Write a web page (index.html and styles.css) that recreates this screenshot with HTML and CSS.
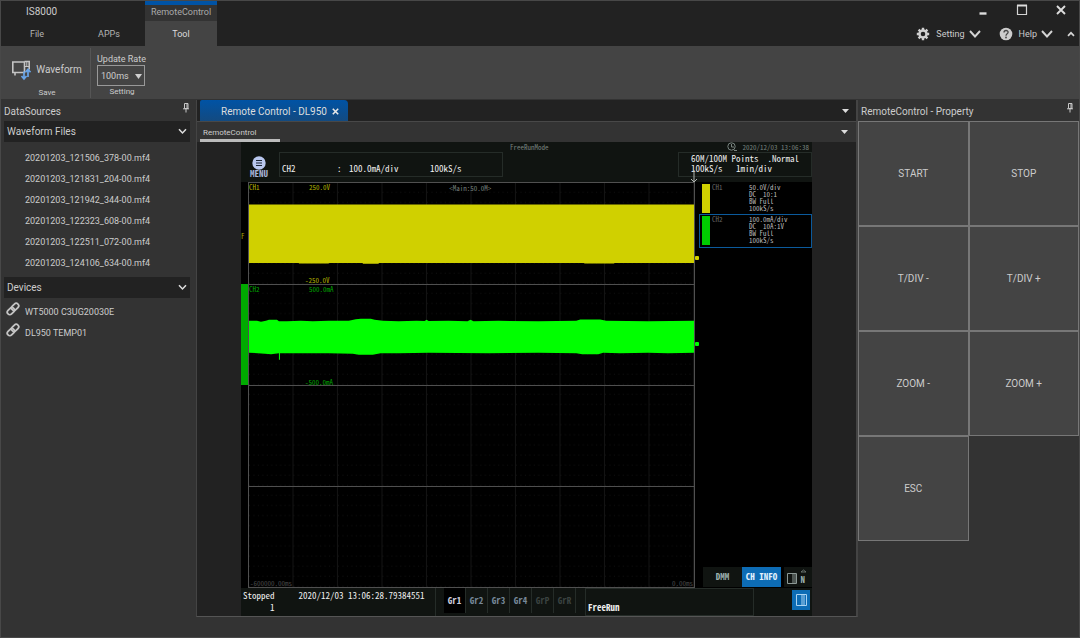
FILE: index.html
```html
<!DOCTYPE html>
<html lang="en">
<head>
<meta charset="utf-8">
<title>IS8000</title>
<link rel="stylesheet" href="styles.css">
</head>
<body>
<div class="app">
  <header class="top">
    <div class="menu-left">
      <span class="app-name">IS8000</span>
      <div class="menu-tabs">
        <button class="menu-tab">File</button>
        <button class="menu-tab">APPs</button>
      </div>
    </div>
    <div class="context-tab">
      <span class="context-name">RemoteControl</span>
      <button class="context-tool">Tool</button>
    </div>
    <div class="top-right">
      <div class="window-buttons">
        <button aria-label="Minimize"><svg width="12" height="12" viewBox="0 0 12 12"><path d="M2.500 9.500h7" stroke="#ddd" stroke-width="2.400"/></svg></button>
        <button aria-label="Maximize"><svg width="12" height="12" viewBox="0 0 12 12"><path d="M1.500 1.500h9v9h-9z" fill="none" stroke="#d4d4d4" stroke-width="1.200"/><path d="M1 1.500h10" stroke="#ddd" stroke-width="2"/></svg></button>
        <button aria-label="Close"><svg width="12" height="12" viewBox="0 0 12 12"><path d="M2 2l8 8M10 2l-8 8" stroke="#ddd" stroke-width="1.900"/></svg></button>
      </div>
      <div class="top-tools">
        <button class="top-tool"><svg width="14" height="14" viewBox="0 0 14 14"><path d="M7 .8v12.400M.8 7h12.400M2.600 2.600l8.800 8.800M11.400 2.600l-8.800 8.800" stroke="#d0d0d0" stroke-width="2.400"/><circle cx="7" cy="7" r="3.500" fill="#222" stroke="#d0d0d0" stroke-width="2.400"/></svg><span>Setting</span><svg width="12" height="8" viewBox="0 0 12 8"><path d="M1 1l5 5.500L11 1" fill="none" stroke="#d4d4d4" stroke-width="1.900"/></svg></button>
        <button class="top-tool"><svg width="14" height="14" viewBox="0 0 14 14"><circle cx="7" cy="7" r="6.300" fill="#ccc"/><path d="M5 5.400c0-2.600 4.200-2.500 4.100-.1C9.100 6.900 7 6.700 7 8.700" fill="none" stroke="#444" stroke-width="1.300"/><circle cx="7" cy="10.500" r=".9" fill="#444"/></svg><span>Help</span><svg width="12" height="8" viewBox="0 0 12 8"><path d="M1 1l5 5.500L11 1" fill="none" stroke="#d4d4d4" stroke-width="1.900"/></svg></button>
        <button class="top-tool" aria-label="Collapse ribbon"><svg width="8" height="6" viewBox="0 0 8 6"><path d="M1 4.800L4 1.800l3 3" fill="none" stroke="#d4d4d4" stroke-width="1.700"/></svg></button>
      </div>
    </div>
  </header>

  <section class="ribbon">
    <div class="ribbon-group save-group">
      <button class="waveform-button">
        <svg width="20" height="22" viewBox="0 0 20 22"><path d="M.8 3h11.700v10.500H.8zM12.500 2.500h4.700v8M3 14v2.500" fill="none" stroke="#c4c4c4" stroke-width="1.600"/><path d="M14.800 3v5M13 7.500h4" stroke="#c4c4c4"/><path d="M12 12.500v7M9.500 17l2.500 3 2.500-3M16 18v-7M13.500 13.200L16 10.300l2.500 2.900" fill="none" stroke="#69a5e8" stroke-width="1.700"/></svg>
        <span>Waveform</span>
      </button>
      <span class="group-name">Save</span>
    </div>
    <div class="ribbon-group rate-group">
      <label for="rate">Update Rate</label>
      <div class="select-box">
        <select id="rate"><option>100ms</option></select>
        <svg class="select-arrow" width="7" height="5" viewBox="0 0 7 5"><path d="M0 0h7L3.500 5z" fill="#d0d0d0"/></svg>
      </div>
      <span class="group-name">Setting</span>
    </div>
  </section>

  <main class="body">
    <aside class="sources">
      <div class="panel-head"><span>DataSources</span><svg width="8" height="10" viewBox="0 0 8 10"><path d="M2.500 .5h3.500v5H2.500zM1 5.800h6M4 6v3.500" fill="none" stroke="#c8c8c8"/><path d="M5 .5v5" stroke="#c8c8c8"/></svg></div>
      <button class="section-head"><span>Waveform Files</span><svg width="9" height="7" viewBox="0 0 9 7"><path d="M1 1.200l3.500 3.800L8 1.200" fill="none" stroke="#ddd" stroke-width="1.500"/></svg></button>
      <ul class="files">
        <li>20201203_121506_378-00.mf4</li>
        <li>20201203_121831_204-00.mf4</li>
        <li>20201203_121942_344-00.mf4</li>
        <li>20201203_122323_608-00.mf4</li>
        <li>20201203_122511_072-00.mf4</li>
        <li>20201203_124106_634-00.mf4</li>
      </ul>
      <button class="section-head"><span>Devices</span><svg width="9" height="7" viewBox="0 0 9 7"><path d="M1 1.200l3.500 3.800L8 1.200" fill="none" stroke="#ddd" stroke-width="1.500"/></svg></button>
      <ul class="devices">
        <li><svg width="14" height="14" viewBox="0 0 14 14"><g fill="none" stroke="#c4c4c4" stroke-width="1.800" transform="rotate(-45 7 7)"><rect x="0" y="4.500" width="8" height="5" rx="2.500"/><rect x="6" y="4.500" width="8" height="5" rx="2.500"/></g></svg><span>WT5000 C3UG20030E</span></li>
        <li><svg width="14" height="14" viewBox="0 0 14 14"><g fill="none" stroke="#c4c4c4" stroke-width="1.800" transform="rotate(-45 7 7)"><rect x="0" y="4.500" width="8" height="5" rx="2.500"/><rect x="6" y="4.500" width="8" height="5" rx="2.500"/></g></svg><span>DL950 TEMP01</span></li>
      </ul>
    </aside>

    <section class="work">
      <div class="doc-tabs">
        <div class="doc-tab"><span>Remote Control - DL950</span><button aria-label="Close tab"><svg width="7" height="7" viewBox="0 0 7 7"><path d="M.8 .8l5.400 5.400M6.200 .8L.8 6.200" stroke="#e8e8e8" stroke-width="1.600"/></svg></button></div>
        <svg width="7" height="4" viewBox="0 0 7 4"><path d="M0 0h7L3.500 4z" fill="#ddd"/></svg>
      </div>
      <div class="sub-tabs">
        <button class="sub-tab">RemoteControl</button>
        <svg width="7" height="4" viewBox="0 0 7 4"><path d="M0 0h7L3.500 4z" fill="#ddd"/></svg>
      </div>
      <div class="stage">
        <div class="scope">
          <div class="scope-head">
            <button class="scope-menu"><svg width="14" height="14" viewBox="0 0 14 14"><circle cx="7" cy="7" r="6.700" fill="#b9c7ee"/><path d="M4 4.500h6M4 7h6M4 9.500h6" stroke="#1c2535" stroke-width="1.200"/></svg><span>MENU</span></button>
            <div class="readout"><span>CH2</span><span>:</span><span>100.0mA/div</span><span>100kS/s</span></div>
            <span class="mode">FreeRunMode</span>
            <div class="acq">
              <div class="clock"><svg width="10" height="10" viewBox="0 0 10 10"><circle cx="4.500" cy="4.500" r="3.700" fill="none" stroke="#78837f"/><path d="M4.500 2v3H7M7 8.500h3" fill="none" stroke="#78837f"/></svg><span>2020/12/03 13:06:38</span></div>
              <div class="acq-box"><span>60M/100M Points&nbsp; .Normal</span><span>100kS/s&nbsp;&nbsp; 1min/div</span></div>
            </div>
          </div>
          <div class="scope-mid">
            <div class="gutter"><span class="mark-1">F</span><span class="mark-2"></span></div>
            <div class="plot">
              <svg class="wave" viewBox="0 0 446 406" preserveAspectRatio="none">
                <defs>
                  <pattern id="grid" width="44.600" height="10.150" patternUnits="userSpaceOnUse"><path d="M44.100 0v10.150" stroke="#131313"/><path d="M0 9.500h44.600" stroke="#121212" stroke-dasharray="1 3.460"/></pattern>
                </defs>
                <rect width="446" height="406" fill="url(#grid)"/>
                <path d="M0 102h446M0 203.500h446M0 305h446" stroke="#505050"/>
                <path d="M0 21.500h446V80.500h-80v.5h-30v-.5H130v.6h-16v-.6H80v.5H50v-.5H0z" fill="#d0d000"/>
                <path d="M0 138.500H8L12 139.500 17 138.500 20 137.500H28L30 139H38L52 138.500 64 139 80 138.500 100 138.500 107 137 112 136.500H122L126 137.500 134 138.500 150 139 168 138.500 176 138.800 178 137.500 180 138.800 200 138.500 219 139 222 137.500 225 139 250 138.500 290 139 328 138.500 332 137.200H352L358 138.500 400 139 446 138.500V170.500L420 171 400 170.500 372 171 355 170.500 350 172H334L328 171 290 170.500 240 171.200 180 170.500 150 171 132 171 124 172.500H110L104 171.500 80 171 31 171V177.500H30V171L22 172 16 171.500 0 170.500z" fill="#0f0"/>
              </svg>
              <span class="tag yellow ch1">CH1</span>
              <span class="tag yellow v-top">250.0V</span>
              <span class="tag main-tag">&lt;Main:50.0M&gt;</span>
              <span class="tag yellow v-bottom">-250.0V</span>
              <span class="tag green ch2">CH2</span>
              <span class="tag green a-top">500.0mA</span>
              <span class="tag green a-bottom">-500.0mA</span>
              <span class="tag dim t-start">-600000.00ms</span>
              <span class="tag dim t-end">0.00ms</span>
              <svg class="trigger" width="8" height="13" viewBox="0 0 8 13"><path d="M4 0v12M1 9l3 3 3-3" fill="none" stroke="#b0b4b0"/></svg>
              <i class="level level-1"></i><i class="level level-2"></i>
            </div>
            <div class="channels">
              <div class="channel"><i class="swatch swatch-1"></i><span class="channel-name">CH1</span><span class="channel-info">50.0V/div<br>DC&nbsp; 10:1<br>BW Full<br>100kS/s</span></div>
              <div class="channel selected"><i class="swatch swatch-2"></i><span class="channel-name">CH2</span><span class="channel-info">100.0mA/div<br>DC&nbsp; 10A:1V<br>BW Full<br>100kS/s</span></div>
              <div class="view-buttons">
                <button>DMM</button><button class="on">CH INFO</button>
                <button class="next"><svg width="20" height="16" viewBox="0 0 20 16"><path d="M.5 4.500h9v10h-9zM6 4.500v10M8 4.500v10" fill="none" stroke="#8c9895"/><path d="M14 3L16.500 1 19 3z" fill="none" stroke="#78837f" stroke-width=".8"/></svg><span>N</span></button>
              </div>
            </div>
          </div>
          <div class="scope-foot">
            <div class="state"><span class="state-name">Stopped<br>1</span><span>2020/12/03 13:06:28.79384551</span></div>
            <div class="groups"><button class="on">Gr1</button><button>Gr2</button><button>Gr3</button><button>Gr4</button><button class="off">GrP</button><button class="off">GrR</button></div>
            <span class="run">FreeRun</span>
            <button class="side" aria-label="Side panel"><svg width="11" height="12" viewBox="0 0 11 12"><path d="M.5 .5h10v11H.5zM6 .5v11M8 .5v11" fill="none" stroke="#a9d2f2"/></svg></button>
          </div>
        </div>
      </div>
    </section>

    <aside class="property">
      <div class="panel-head"><span>RemoteControl - Property</span><svg width="8" height="10" viewBox="0 0 8 10"><path d="M2.500 .5h3.500v5H2.500zM1 5.800h6M4 6v3.500" fill="none" stroke="#c8c8c8"/><path d="M5 .5v5" stroke="#c8c8c8"/></svg></div>
      <div class="keys">
        <button>START</button><button>STOP</button>
        <button>T/DIV -</button><button>T/DIV +</button>
        <button>ZOOM -</button><button>ZOOM +</button>
        <button>ESC</button>
      </div>
    </aside>
  </main>
  <footer class="status"></footer>
</div>
</body>
</html>
```

FILE: styles.css
```css
* { box-sizing: border-box; }
body { margin: 0; background: #333; color: #ccc; font: 10px/14px Roboto, "Open Sans", sans-serif; }
button, select { margin: 0; padding: 0; border: 0; background: none; color: inherit; font: inherit; }
ul { list-style: none; margin: 0; padding: 0; }
svg { display: block; flex: none; }
.app { min-height: 100vh; display: flex; flex-direction: column; border: 1px solid #484848; white-space: nowrap; }

/* Title bar and menu */
.top { display: flex; height: 45px; background: #222; }
.menu-left { width: 144px; padding-top: 4px; }
.app-name { display: block; padding-left: 25px; }
.menu-tabs { display: flex; margin-top: 8px; color: #b4b4b4; font-size: 9px; }
.menu-tab { width: 72px; }
.context-tab { width: 72px; display: flex; flex-direction: column; border-top: 4px solid #0053a5; background: #333; text-align: center; color: #aaa; font-size: 9px; }
.context-name { height: 16px; }
.context-tool { flex: 1; background: #444; color: #ddd; }
.top-right { margin-left: auto; padding-top: 3px; }
.window-buttons { display: flex; justify-content: flex-end; gap: 27px; padding-right: 12px; }
.top-tools { display: flex; justify-content: flex-end; margin-top: 11px; padding-right: 4px; gap: 18px; align-items: center; font-size: 9px; }
.top-tool { display: flex; align-items: center; gap: 4px; }
.top-tool span { padding-left: 2px; }
.top-tool:last-child { margin-left: -4px; }

/* Ribbon */
.ribbon { display: flex; height: 54px; background: #444; border-bottom: 1px solid #333; }
.ribbon-group { display: flex; flex-direction: column; }
.save-group { width: 90px; align-items: center; justify-content: flex-end; margin: 2px 0 1px; padding-left: 3px; border-right: 1px solid #555; }
.waveform-button { display: flex; align-items: center; gap: 4px; margin-bottom: 6px; }
.rate-group { padding: 7px 0 0 6px; width: 56px; }
.rate-group label { font-size: 9px; line-height: 12px; }
.select-box { position: relative; width: 48px; height: 21px; border: 1px solid #999; }
.select-box select { width: 100%; height: 100%; padding-left: 3px; appearance: none; font-size: 9px; }
.select-arrow { position: absolute; right: 2px; top: 8px; pointer-events: none; }
.group-name { font-size: 8px; line-height: 11px; text-align: center; }

/* Docked panels */
.body { flex: 1; display: flex; }
.panel-head { display: flex; justify-content: space-between; height: 21px; padding: 3px 5px 0 3px; }
.panel-head span { line-height: 17px; }
.sources { width: 195px; padding: 0 6px 0 3px; }
.sources .panel-head { padding: 3px 0 0; }
.section-head { width: 100%; height: 21px; padding: 0 3px; display: flex; align-items: center; justify-content: space-between; background: #222; }
.files { padding: 6px 0 3px 21px; font-size: 9px; line-height: 21px; }
.devices { padding-top: 4px; font-size: 9px; line-height: 21px; }
.devices li { display: flex; gap: 5px; align-items: flex-start; padding-left: 2px; }
.property { width: 221px; }
.keys { display: grid; grid-template-columns: 1fr 1fr; grid-auto-rows: 105px; }
.keys button { background: #444; border: 1px solid #777; }

/* Document area */
.work { flex: 1; display: flex; flex-direction: column; background: #222; border-left: 1px solid #444; border-right: 2px solid #444; border-bottom: 1px solid #555; }
.doc-tabs, .sub-tabs { display: flex; align-items: center; justify-content: space-between; padding: 0 7px 0 3px; }
.doc-tabs { height: 22px; border-bottom: 1px solid #484848; }
.doc-tab { display: flex; align-items: center; align-self: stretch; gap: 5px; padding: 2px 9px 0 21px; background: linear-gradient(#0053a5, #134a80); border-radius: 2px 4px 0 0; color: #ddd; }
.sub-tabs { height: 20px; padding-right: 8px; background: #333; }
.sub-tab { align-self: stretch; width: 80px; padding: 5px 0 0 3px; text-align: left; font-size: 8px; line-height: 12px; border-bottom: 3px solid #bbb; }
.stage { flex: 1; display: flex; padding: 0 44px; }

/* Instrument screen */
.scope { flex: 1; display: flex; flex-direction: column; background: #000; font: 9px/10px "Noto Sans Mono CJK JP", "Liberation Mono", monospace; color: #eee; }
.scope-head { display: flex; height: 40px; background: #101411; }
.scope-menu { width: 36px; padding-top: 14px; display: flex; flex-direction: column; align-items: center; color: #a9b4d8; font-weight: bold; line-height: 8px; }
.readout { display: grid; grid-template-columns: 55px 12px 81px 1fr; align-items: end; width: 224px; height: 25px; margin: 10px 0 0 2px; padding: 0 2px 2px; border: 1px solid #252c28; }
.mode { padding-left: 7px; font-size: 7px; color: #78837f; }
.acq { margin-left: auto; width: 134px; }
.clock { display: flex; justify-content: flex-end; align-items: center; gap: 6px; padding-right: 3px; height: 10px; font-size: 7px; color: #78837f; }
.acq-box { display: flex; flex-direction: column; height: 25px; padding: 1px 0 0 12px; border: 1px solid #252c28; }
.scope-mid { flex: 1; display: flex; }
.gutter { width: 7px; display: flex; flex-direction: column; font-size: 7px; color: #aa0; }
.mark-1 { height: 102px; padding-top: 49px; }
.mark-2 { height: 101px; background: #0a0; }
.plot { flex: 1; position: relative; border: 1px solid #505050; }
.wave { width: 100%; height: 100%; position: absolute; inset: 0; }
.tag { position: absolute; font-size: 7px; line-height: 8px; color: #78837f; }
.yellow { color: #b4b400; }
.green { color: #00a800; }
.dim { color: #4a4a4a; }
.ch1 { left: 0; top: 0; }
.v-top { left: 60px; top: 0; }
.main-tag { left: 45%; top: 1px; }
.v-bottom { left: 56px; top: 93px; }
.ch2 { left: 0; top: 102px; }
.a-top { left: 60px; top: 102px; }
.a-bottom { left: 56px; top: 195px; }
.t-start { left: 1px; bottom: 0; }
.t-end { right: 1px; bottom: 0; }
.trigger { position: absolute; right: -4px; top: -13px; }
.level { position: absolute; right: -5px; width: 4px; height: 4px; border-radius: 1px; }
.level-1 { top: 73px; background: #d0d000; }
.level-2 { top: 159px; background: #0f0; }
.channels { width: 117px; padding: 1px 0 0 4px; display: flex; flex-direction: column; }
.channel { display: flex; height: 31px; padding: 1px 3px; font-size: 7px; line-height: 7px; }
.channel.selected { height: 34px; padding: 1px 2px; border: 1px solid #0b5a9c; }
.swatch { width: 8px; height: 29px; }
.swatch-1 { background: #d0d000; }
.swatch-2 { background: #0c0; }
.channel-name { width: 39px; padding-left: 2px; color: #666; }
.channel-info { color: #bbb; }
.view-buttons { display: grid; grid-template-columns: 39px 39px 1fr; margin-top: auto; height: 22px; padding: 1px 0 1px 4px; font-weight: bold; color: #9db2b0; }
.view-buttons button { background: #101411; }
.view-buttons .on { background: #0d6cb5; color: #e2f1fd; }
.view-buttons .next { display: flex; position: relative; align-items: flex-end; margin-left: 3px; padding: 0 0 2px 3px; }
.view-buttons .next span { position: absolute; right: 7px; bottom: 2px; }
.scope-foot { display: flex; height: 28px; background: #101411; }
.state { display: flex; gap: 24px; width: 195px; padding: 2px 0 0 2px; border-right: 1px solid #252c28; line-height: 12px; }
.state-name { text-align: right; }
.groups { display: flex; height: 25px; margin-left: 8px; font-weight: bold; color: #789; }
.groups button { width: 22px; border-right: 1px solid #252c28; }
.groups .on { background: #000; color: #ccd; }
.groups .off { color: #3a4240; }
.run { flex: 1; padding: 14px 0 0 2px; margin: 0 38px 0 9px; border: 1px solid #252c28; font-weight: bold; }
.side { width: 18px; height: 20px; margin: 2px 2px 0 0; padding-left: 4px; background: #0d6cb5; }
.status { height: 20px; background: #333; }
```
